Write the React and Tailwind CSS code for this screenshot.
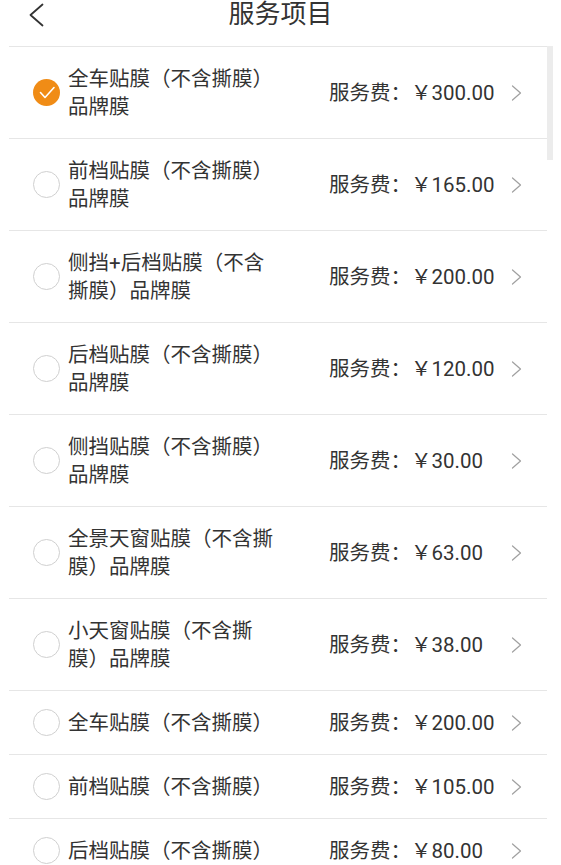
import React from "react";

const items = [
  { name: "全车贴膜（不含撕膜）品牌膜", price: "300.00", checked: true },
  { name: "前档贴膜（不含撕膜）品牌膜", price: "165.00" },
  { name: "侧挡+后档贴膜（不含撕膜）品牌膜", price: "200.00" },
  { name: "后档贴膜（不含撕膜）品牌膜", price: "120.00" },
  { name: "侧挡贴膜（不含撕膜）品牌膜", price: "30.00" },
  { name: "全景天窗贴膜（不含撕膜）品牌膜", price: "63.00" },
  { name: "小天窗贴膜（不含撕膜）品牌膜", price: "38.00" },
  { name: "全车贴膜（不含撕膜）", price: "200.00" },
  { name: "前档贴膜（不含撕膜）", price: "105.00" },
  { name: "后档贴膜（不含撕膜）", price: "80.00" },
];

function Radio({ checked }) {
  if (checked) {
    return (
      <svg width="27" height="27" viewBox="0 0 27 27" className="shrink-0">
        <circle cx="13.5" cy="13.5" r="13.5" fill="#f08c16" />
        <path
          d="M7.5 13.5 L12 18.5 L21 8.5"
          fill="none"
          stroke="#fff"
          strokeWidth="1.6"
          strokeLinecap="round"
          strokeLinejoin="round"
        />
      </svg>
    );
  }
  return (
    <div className="w-[27px] h-[27px] shrink-0 rounded-full border-[1.5px] border-[#d0d0d0]" />
  );
}

function Chevron() {
  return (
    <svg width="11" height="16" viewBox="0 0 11 16" className="shrink-0">
      <path
        d="M1.5 1 L9.5 8 L1.5 15"
        fill="none"
        stroke="#a0a0a0"
        strokeWidth="1.2"
        strokeLinecap="round"
        strokeLinejoin="round"
      />
    </svg>
  );
}

export default function App() {
  return (
    <div
      className="relative w-[561px] h-[865px] overflow-hidden bg-white text-[#333]"
      style={{ fontFamily: '"Roboto", "Noto Sans CJK SC", sans-serif' }}
    >
      <header className="relative h-[46px] flex justify-center">
        <svg
          width="16"
          height="24"
          viewBox="0 0 16 24"
          className="absolute left-[28px] top-[3px]"
        >
          <path
            d="M14.5 1.5 L2.5 12 L14.5 22.5"
            fill="none"
            stroke="#333"
            strokeWidth="1.8"
            strokeLinecap="round"
            strokeLinejoin="round"
          />
        </svg>
        <h1 className="text-[26px] leading-[28px] font-normal">服务项目</h1>
      </header>

      <ul className="ml-[9px] w-[538px] border-t border-[#e6e6e6]">
        {items.map((item, idx) => (
          <li
            key={idx}
            className="flex items-center pl-[24px] pr-[25px] py-[17.5px] border-b border-[#e6e6e6]"
          >
            <Radio checked={item.checked} />
            <div className="flex-1 ml-[8px]">
              <p className="w-[210px] text-[20.5px] leading-[28px]">{item.name}</p>
            </div>
            <div className="w-[182px] text-[20.5px] leading-[28px] whitespace-nowrap">
              服务费：￥{item.price}
            </div>
            <Chevron />
          </li>
        ))}
      </ul>

      <div className="absolute left-[547px] top-[46px] w-[6px] h-[114px] bg-[#ececec]" />
    </div>
  );
}
